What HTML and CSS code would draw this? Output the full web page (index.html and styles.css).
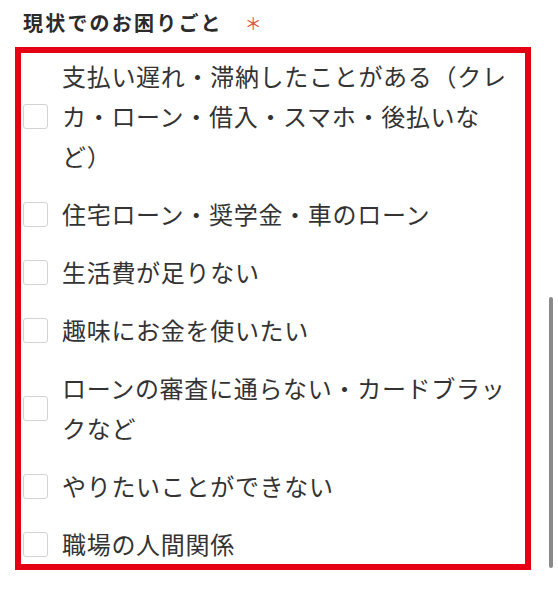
FILE: index.html
```html
<!DOCTYPE html>
<html lang="ja">
<head>
<meta charset="utf-8">
<link rel="stylesheet" href="styles.css">
</head>
<body>
<div class="page">
  <div class="field-title">
    <span class="label">現状でのお困りごと</span>
    <span class="required">＊</span>
  </div>
  <div class="options">
    <label class="option"><span class="box"></span><span class="text">支払い遅れ・滞納したことがある（クレカ・ローン・借入・スマホ・後払いなど）</span></label>
    <label class="option"><span class="box"></span><span class="text">住宅ローン・奨学金・車のローン</span></label>
    <label class="option"><span class="box"></span><span class="text">生活費が足りない</span></label>
    <label class="option"><span class="box"></span><span class="text">趣味にお金を使いたい</span></label>
    <label class="option"><span class="box"></span><span class="text">ローンの審査に通らない・カードブラックなど</span></label>
    <label class="option"><span class="box"></span><span class="text">やりたいことができない</span></label>
    <label class="option"><span class="box"></span><span class="text">職場の人間関係</span></label>
  </div>
  <div class="scrollbar"></div>
</div>
</body>
</html>
```
FILE: styles.css
```css
html, body {
  margin: 0;
  padding: 0;
  background: #ffffff;
}
body {
  font-family: "Noto Sans CJK JP", "Noto Sans", sans-serif;
  color: #333333;
}
.page {
  position: relative;
  width: 558px;
  height: 600px;
  overflow: hidden;
}
.field-title {
  display: flex;
  align-items: center;
  height: 48px;
  padding: 0 0 0 23px;
  box-sizing: border-box;
  margin-top: -1px;
}
.label {
  font-size: 20px;
  font-weight: 700;
  letter-spacing: 2.2px;
  line-height: 48px;
  color: #2b2b2b;
}
.required {
  margin-left: 22px;
  font-size: 17px;
  color: #e0553c;
  line-height: 48px;
}
.options {
  width: 516px;
  box-sizing: border-box;
  margin-left: 15px;
  border: 6px solid #e50014;
  padding: 3px 14px 0 2px;
  display: flex;
  flex-direction: column;
  gap: 18px;
}
.option {
  display: flex;
  align-items: center;
  gap: 14px;
}
.box {
  flex: none;
  width: 23px;
  height: 23px;
  border: 1px solid #d3d3d3;
  border-radius: 3px;
  background: #fff;
}
.text {
  font-size: 24px;
  letter-spacing: 0.7px;
  line-height: 40px;
  color: #333333;
  flex: 1;
}
.scrollbar {
  position: absolute;
  left: 549px;
  top: 297px;
  width: 4px;
  height: 271px;
  border-radius: 2px;
  background: #8a8a8a;
}
```
